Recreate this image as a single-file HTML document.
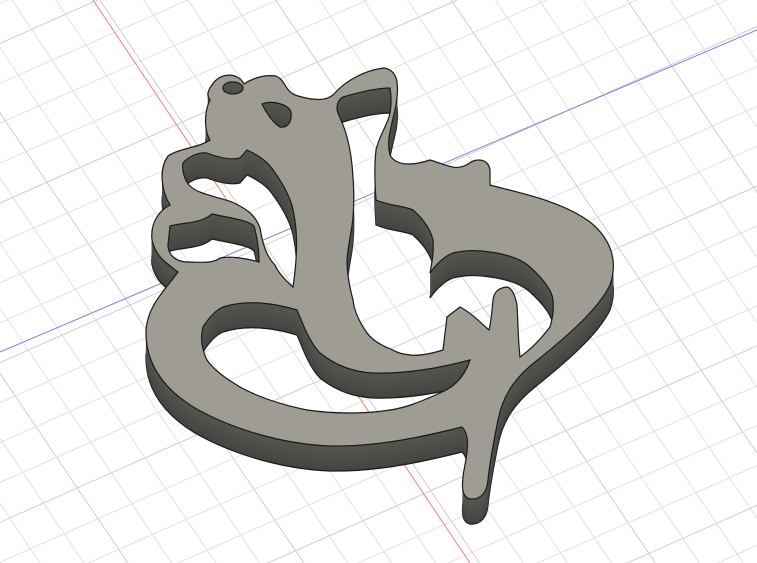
<!DOCTYPE html>
<html><head><meta charset="utf-8"><style>html,body{margin:0;padding:0;background:#fff;overflow:hidden;width:757px;height:563px}svg{display:block;overflow:hidden}</style></head>
<body>
<svg id="s" width="757" height="563" viewBox="0 0 757 563" xmlns="http://www.w3.org/2000/svg">
<rect width="757" height="563" fill="#fff"/>
<g id="grid"></g>
<line x1="93" y1="0" x2="470" y2="563" stroke="#f08080" stroke-width="1"/>
<line x1="0" y1="352" x2="757" y2="30" stroke="#8080f0" stroke-width="1"/>
<defs>
<path id="shape" fill-rule="evenodd" d="
M212,85 C220,72 238,72 244,84 C250,80 262,74 276,76 C286,80 284,92 298,96 C312,100 326,102 334,94 C346,80 366,70 384,68 C396,70 400,80 396,105 C392,125 386,140 390,155 C396,166 412,166 430,160 C445,164 455,172 468,164 C476,158 488,158 490,170 L490,185 C515,192 560,200 590,222 C612,240 618,262 610,285 C598,310 565,338 535,362 C515,378 503,395 498,420 C494,440 490,460 488,480 C487,493 480,500 470,499 C462,497 461,488 464,470 C468,450 470,435 462,427 C430,435 380,447 330,446 C280,444 230,428 195,408 C162,388 145,362 146,330 C148,305 165,290 178,272 C168,264 156,258 152,240 C150,222 160,210 170,205 C162,192 158,170 168,156 C180,148 198,148 210,140 C204,130 204,112 210,100 C206,95 208,90 212,85 Z
M223,88 C223,80 242,80 243,88 C243,96 223,96 223,88 Z
M262,104 C272,100 288,104 291,112 C292,122 288,128 280,127 C272,122 266,112 262,104 Z
M183,163 C190,155 200,152 207,153 C220,158 232,160 240,158 L247,150 C258,155 268,162 273,170 C284,185 292,200 294,215 C298,235 297,260 293,287 C285,280 278,272 275,265 C265,255 262,240 260,228 C255,214 245,208 232,202 C215,196 198,194 190,186 C184,180 182,170 183,163 Z
M170,226 C185,222 200,224 212,214 C230,218 248,220 254,226 C258,240 259,252 259,262 C245,258 230,256 220,258 C212,264 200,262 188,262 C176,262 168,255 168,245 Z
M343,97 C360,92 376,88 390,88 C392,100 391,112 388,120 C383,132 378,140 376,150 C374,168 375,185 376,200 C390,206 405,206 413,210 C422,218 430,228 433,240 C434,252 432,262 430,273 C438,262 445,256 453,253 C465,250 478,250 490,252 C505,254 520,258 530,267 C542,278 552,290 553,300 C554,312 552,320 550,327 C540,340 530,350 520,357 C518,340 518,320 517,305 C515,295 512,288 507,287 C498,288 494,292 493,300 C492,312 491,322 489,330 C480,322 470,312 460,307 L447,317 L443,350 C430,354 418,356 410,355 C400,354 396,352 393,350 C380,345 372,340 367,333 C358,320 354,310 353,300 C349,285 347,272 347,260 C348,245 352,230 353,217 C354,205 354,190 353,177 C352,160 350,148 347,137 C344,125 339,117 337,110 C337,103 339,99 343,97 Z
M203,327 C210,316 216,310 223,307 C245,300 270,302 297,310 L300,317 C305,330 312,345 320,353 C335,365 352,372 373,373 C405,374 440,368 470,360 C465,375 455,387 440,393 C420,402 405,408 390,410 C365,414 335,414 307,410 C283,405 258,397 240,387 C225,378 214,370 207,360 C202,350 200,338 203,327 Z"/>
</defs>
<g id="ext"></g>
<use href="#shape" fill="#9f9c93" stroke="#1a1a1a" stroke-width="1.2"/>
</svg>
<script>
(function(){
var ns="http://www.w3.org/2000/svg";
var g=document.getElementById("grid");
var ox=265,oy=245,s=37;
var a=[0.914,-0.406],b=[0.56,0.83];
function line(p,d,col,w){var l=document.createElementNS(ns,"line");
l.setAttribute("x1",p[0]-d[0]*1500);l.setAttribute("y1",p[1]-d[1]*1500);
l.setAttribute("x2",p[0]+d[0]*1500);l.setAttribute("y2",p[1]+d[1]*1500);
l.setAttribute("stroke",col);l.setAttribute("stroke-width",w);g.appendChild(l);}
for(var i=-40;i<=40;i++){
 var col=(i%4===0)?"#cfcfcf":"#e2e2e2";
 line([ox+a[0]*s*i,oy+a[1]*s*i],b,col,1);
 line([ox+b[0]*s*i,oy+b[1]*s*i],a,col,1);
}
var e=document.getElementById("ext");
for(var k=25;k>=1;k--){var u=document.createElementNS(ns,"use");
u.setAttribute("href","#shape");u.setAttribute("transform","translate(0,"+k+")");
var c=Math.round(68+(25-k)*0.7);
u.setAttribute("fill","rgb("+c+","+c+","+(c-4)+")");
if(k===25){u.setAttribute("stroke","#1a1a1a");u.setAttribute("stroke-width","1.2");}
e.appendChild(u);}
})();
</script>
</body></html>
